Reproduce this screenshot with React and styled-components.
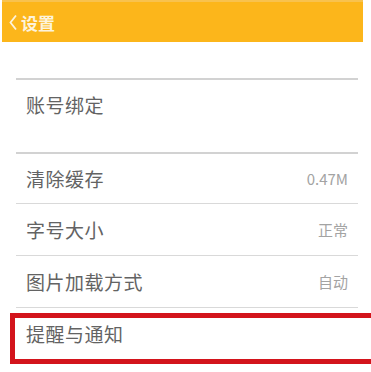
import React from "react";
import styled, { createGlobalStyle } from "styled-components";

const Global = createGlobalStyle`
  html, body { margin: 0; padding: 0; background: #fff; overflow: hidden; }
  body { font-family: "Noto Sans CJK SC", "Noto Sans", sans-serif; }
`;

const Page = styled.div`
  width: 371px;
  height: 372px;
  overflow: hidden;
  background: #fff;
`;

const Header = styled.header`
  margin: 0 8px 0 2px;
  height: 42px;
  background: #fcb61b;
  border-top: 2px solid #f8c24e;
  box-sizing: border-box;
  display: flex;
  align-items: center;
  padding-left: 6px;
  gap: 3px;
  color: #fdf3dc;
  font-size: 17px;
  font-weight: 700;
`;

const Back = styled.svg`
  width: 10px;
  height: 17px;
  flex: none;
`;

const List = styled.div`
  margin: 36px 13px 0 16px;
`;

const Divider = styled.div`
  height: ${(p) => p.$h || 1}px;
  background: ${(p) => p.$c || "#d6d6d6"};
`;

const Spacer = styled.div`
  height: ${(p) => p.$h}px;
`;

const Row = styled.div`
  position: relative;
  height: ${(p) => p.$h || 51}px;
  box-sizing: border-box;
  display: flex;
  align-items: center;
  justify-content: space-between;
  padding: 0 10px;
  border-bottom: ${(p) => (p.$last ? "none" : "1px solid #d9d9d9")};
`;

const Label = styled.span`
  font-size: 19px;
  color: #636363;
  letter-spacing: 0.5px;
`;

const Value = styled.span`
  font-size: 15px;
  color: #a3a3a3;
  font-family: "Noto Sans CJK SC", "Open Sans", sans-serif;
`;

const Highlight = styled.div`
  position: absolute;
  left: -6px;
  right: -30px;
  top: 5px;
  height: 51px;
  box-sizing: border-box;
  border: 5px solid #d3141c;
  pointer-events: none;
`;

const rows = [
  { label: "清除缓存", value: "0.47M" },
  { label: "字号大小", value: "正常" },
  { label: "图片加载方式", value: "自动" },
];

export default function App() {
  return (
    <Page>
      <Global />
      <Header>
        <Back viewBox="0 0 10 17">
          <path d="M8 1.5 L2.5 8.5 L8 15.5" fill="none" stroke="#fdf3dc" strokeWidth="1.8" />
        </Back>
        <span>设置</span>
      </Header>
      <List>
        <Divider $h={2} $c="#d2d2d2" />
        <Row $h={49} $last>
          <Label>账号绑定</Label>
        </Row>
        <Spacer $h={23} />
        <Divider $h={2} $c="#d2d2d2" />
        {rows.map((r) => (
          <Row key={r.label} $h={r.label === "清除缓存" ? 50 : 52}>
            <Label>{r.label}</Label>
            <Value>{r.value}</Value>
          </Row>
        ))}
        <Row $last>
          <Label>提醒与通知</Label>
          <Highlight />
        </Row>
      </List>
    </Page>
  );
}
